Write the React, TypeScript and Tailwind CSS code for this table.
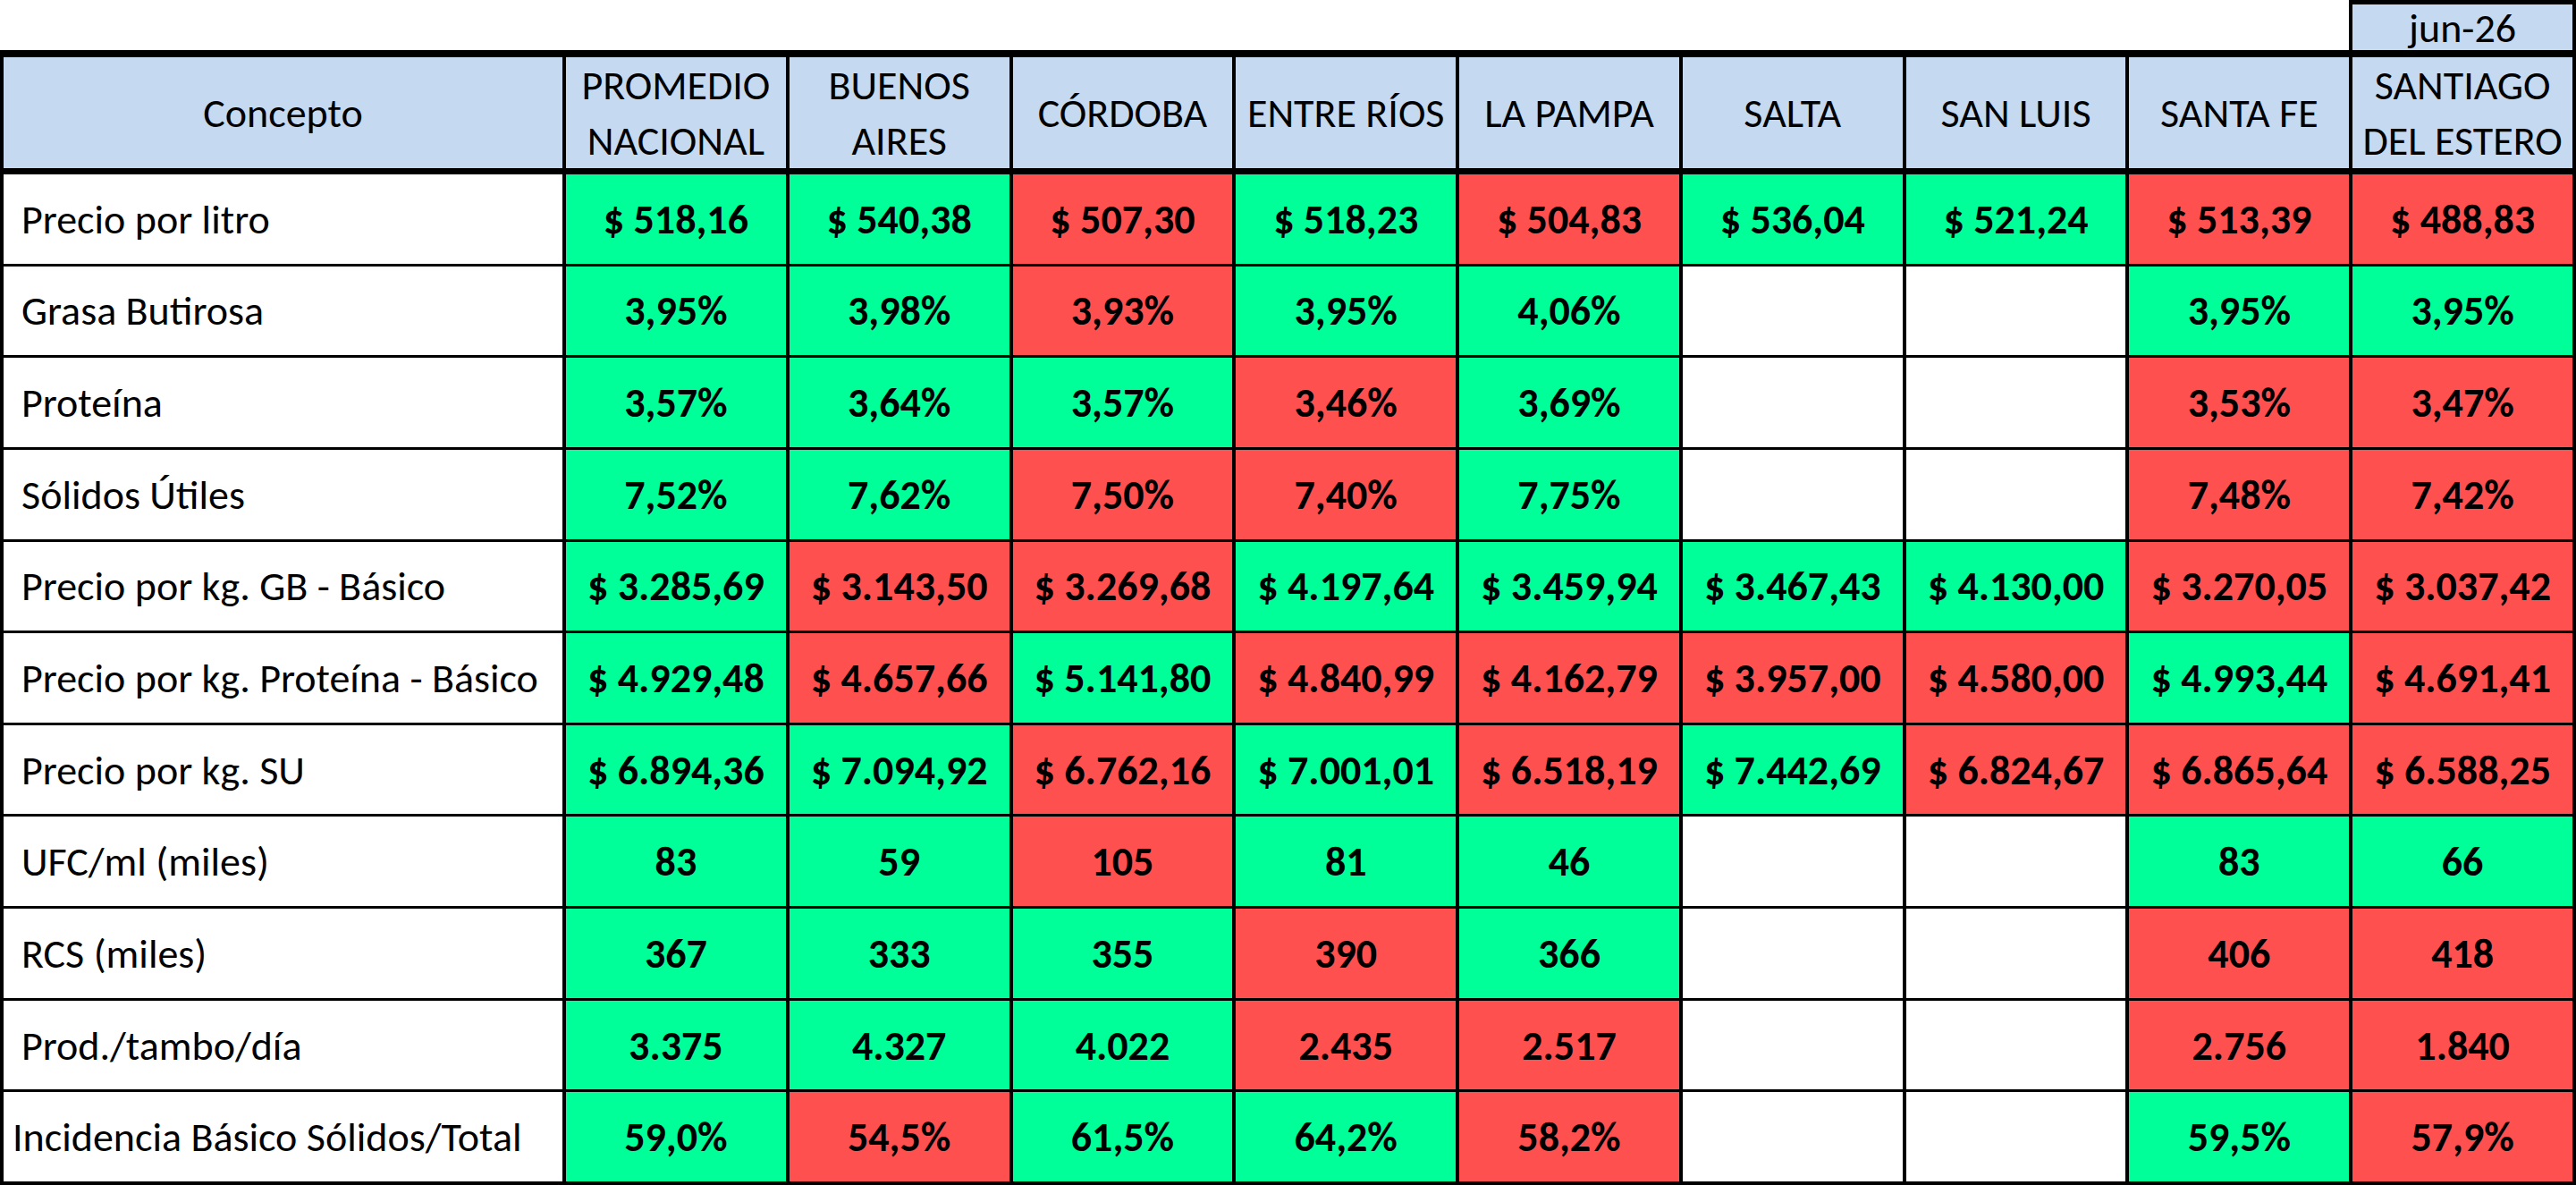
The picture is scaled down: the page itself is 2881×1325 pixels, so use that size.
import React from 'react';

type Tone = 'g' | 'r' | 'w';

const headers: string[][] = [
  ['PROMEDIO', 'NACIONAL'],
  ['BUENOS', 'AIRES'],
  ['CÓRDOBA'],
  ['ENTRE RÍOS'],
  ['LA PAMPA'],
  ['SALTA'],
  ['SAN LUIS'],
  ['SANTA FE'],
  ['SANTIAGO', 'DEL ESTERO'],
];

// each cell: value + tone (g = verde, r = rojo, w = vacío)
const rows: { label: string; tight?: boolean; cells: [string, Tone][] }[] = [
  {
    label: 'Precio por litro',
    cells: [
      ['$ 518,16', 'g'], ['$ 540,38', 'g'], ['$ 507,30', 'r'], ['$ 518,23', 'g'], ['$ 504,83', 'r'],
      ['$ 536,04', 'g'], ['$ 521,24', 'g'], ['$ 513,39', 'r'], ['$ 488,83', 'r'],
    ],
  },
  {
    label: 'Grasa Butirosa',
    cells: [
      ['3,95%', 'g'], ['3,98%', 'g'], ['3,93%', 'r'], ['3,95%', 'g'], ['4,06%', 'g'],
      ['', 'w'], ['', 'w'], ['3,95%', 'g'], ['3,95%', 'g'],
    ],
  },
  {
    label: 'Proteína',
    cells: [
      ['3,57%', 'g'], ['3,64%', 'g'], ['3,57%', 'g'], ['3,46%', 'r'], ['3,69%', 'g'],
      ['', 'w'], ['', 'w'], ['3,53%', 'r'], ['3,47%', 'r'],
    ],
  },
  {
    label: 'Sólidos Útiles',
    cells: [
      ['7,52%', 'g'], ['7,62%', 'g'], ['7,50%', 'r'], ['7,40%', 'r'], ['7,75%', 'g'],
      ['', 'w'], ['', 'w'], ['7,48%', 'r'], ['7,42%', 'r'],
    ],
  },
  {
    label: 'Precio por kg. GB - Básico',
    cells: [
      ['$ 3.285,69', 'g'], ['$ 3.143,50', 'r'], ['$ 3.269,68', 'r'], ['$ 4.197,64', 'g'], ['$ 3.459,94', 'g'],
      ['$ 3.467,43', 'g'], ['$ 4.130,00', 'g'], ['$ 3.270,05', 'r'], ['$ 3.037,42', 'r'],
    ],
  },
  {
    label: 'Precio por kg. Proteína - Básico',
    cells: [
      ['$ 4.929,48', 'g'], ['$ 4.657,66', 'r'], ['$ 5.141,80', 'g'], ['$ 4.840,99', 'r'], ['$ 4.162,79', 'r'],
      ['$ 3.957,00', 'r'], ['$ 4.580,00', 'r'], ['$ 4.993,44', 'g'], ['$ 4.691,41', 'r'],
    ],
  },
  {
    label: 'Precio por kg. SU',
    cells: [
      ['$ 6.894,36', 'g'], ['$ 7.094,92', 'g'], ['$ 6.762,16', 'r'], ['$ 7.001,01', 'g'], ['$ 6.518,19', 'r'],
      ['$ 7.442,69', 'g'], ['$ 6.824,67', 'r'], ['$ 6.865,64', 'r'], ['$ 6.588,25', 'r'],
    ],
  },
  {
    label: 'UFC/ml (miles)',
    cells: [
      ['83', 'g'], ['59', 'g'], ['105', 'r'], ['81', 'g'], ['46', 'g'],
      ['', 'w'], ['', 'w'], ['83', 'g'], ['66', 'g'],
    ],
  },
  {
    label: 'RCS (miles)',
    cells: [
      ['367', 'g'], ['333', 'g'], ['355', 'g'], ['390', 'r'], ['366', 'g'],
      ['', 'w'], ['', 'w'], ['406', 'r'], ['418', 'r'],
    ],
  },
  {
    label: 'Prod./tambo/día',
    cells: [
      ['3.375', 'g'], ['4.327', 'g'], ['4.022', 'g'], ['2.435', 'r'], ['2.517', 'r'],
      ['', 'w'], ['', 'w'], ['2.756', 'r'], ['1.840', 'r'],
    ],
  },
  {
    label: 'Incidencia Básico Sólidos/Total',
    tight: true,
    cells: [
      ['59,0%', 'g'], ['54,5%', 'r'], ['61,5%', 'g'], ['64,2%', 'g'], ['58,2%', 'r'],
      ['', 'w'], ['', 'w'], ['59,5%', 'g'], ['57,9%', 'r'],
    ],
  },
];

const toneClass: Record<Tone, string> = {
  g: 'bg-[#00ff99]',
  r: 'bg-[#ff5050]',
  w: 'bg-white',
};

export default function App() {
  return (
    <div className="w-[2881px] h-[1325px] bg-white text-black text-[46px] leading-none font-['Carlito','Calibri','Lato',sans-serif]">
      <div className="flex justify-end">
        <div className="w-[254px] h-[56px] border-t-[5px] border-x-[4px] border-black bg-[#c5d9f1] flex items-center justify-center">
          jun-26
        </div>
      </div>

      <div className="flex flex-col gap-y-[8px] bg-black border-t-[8px] border-x-[4px] border-b-[4px] border-black">
        <div className="grid grid-cols-[625px_repeat(9,minmax(0,1fr))] gap-x-[4px] h-[123px]">
          <div className="bg-[#c5d9f1] flex items-center justify-center">Concepto</div>
          {headers.map((lines) => (
            <div
              key={lines.join(' ')}
              className="bg-[#c5d9f1] flex flex-col items-center justify-center text-center leading-[62px] whitespace-nowrap"
            >
              {lines.map((l) => (
                <span key={l}>{l}</span>
              ))}
            </div>
          ))}
        </div>

        <div className="grid grid-cols-[625px_repeat(9,minmax(0,1fr))] grid-rows-[repeat(11,minmax(0,1fr))] gap-x-[4px] gap-y-[3px] h-[1126px]">
          {rows.map((row) => (
            <React.Fragment key={row.label}>
              <div className={`bg-white flex items-center whitespace-nowrap ${row.tight ? 'pl-[10px]' : 'pl-[20px]'}`}>
                {row.label}
              </div>
              {row.cells.map(([v, t], i) => (
                <div
                  key={i}
                  className={`${toneClass[t]} flex items-center justify-center font-bold whitespace-nowrap`}
                >
                  {v}
                </div>
              ))}
            </React.Fragment>
          ))}
        </div>
      </div>
    </div>
  );
}
